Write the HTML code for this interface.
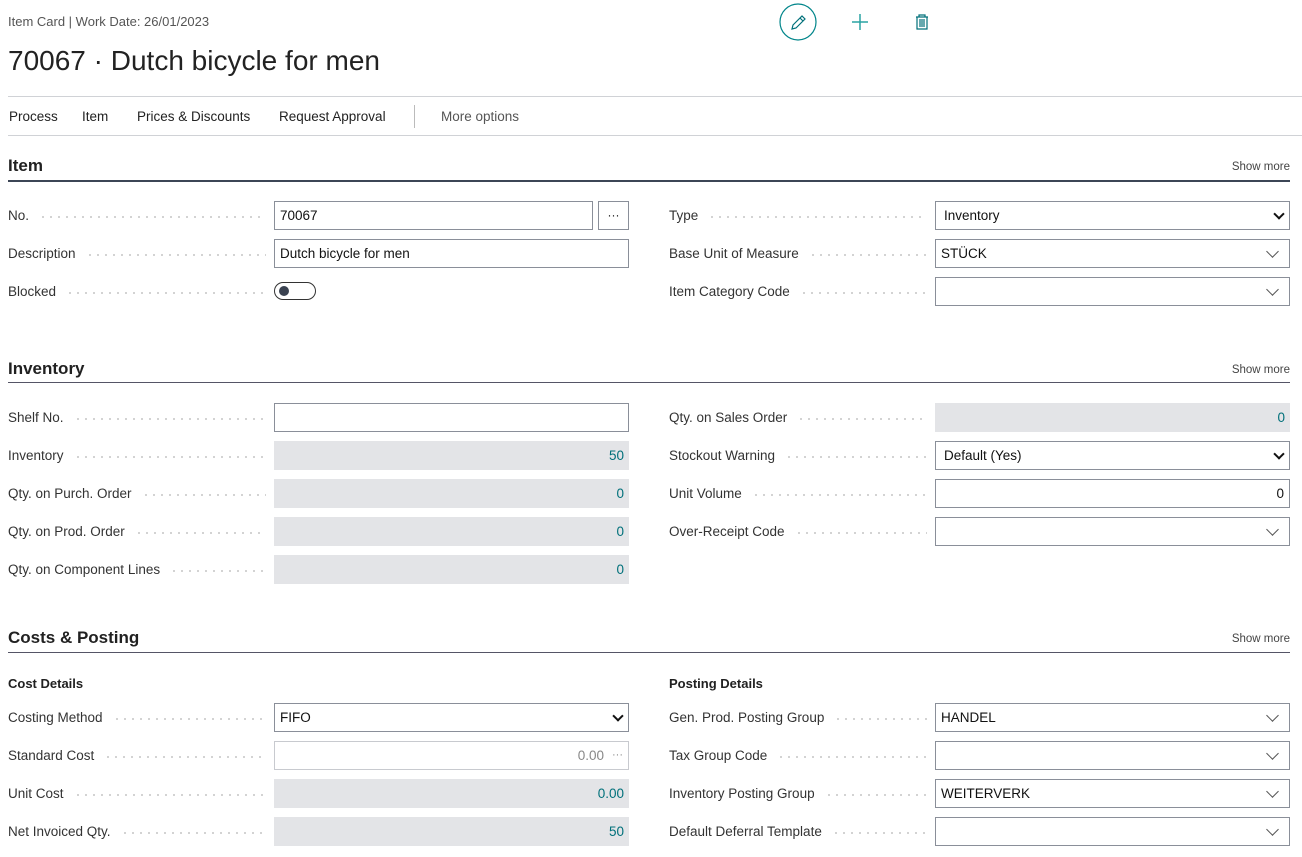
<!DOCTYPE html>
<html><head><meta charset="utf-8"><style>
*{box-sizing:border-box;margin:0;padding:0}
body{width:1302px;height:857px;background:#fff;font-family:"Liberation Sans",sans-serif;color:#212121;position:relative;overflow:hidden;font-size:13.5px}
.a{position:absolute}
.row{position:absolute;height:30px;width:621px;display:flex;align-items:center}
.lab{width:266px;display:flex;align-items:center;height:100%;padding-right:8px;color:#333}
.lab span{white-space:nowrap}
.lab i{flex:1;margin-left:10px;height:2px;margin-top:4px;background-image:radial-gradient(circle,#c4c4c4 0.8px,transparent 1px);background-size:8px 2px;background-repeat:repeat-x}
.f{width:355px;height:29px;border:1px solid #8a8f99;display:flex;align-items:center;padding:0 5px;position:relative;color:#111}
.ro{background:#e3e4e7;border:none;justify-content:flex-end;color:#00707a;padding-right:5px}
.dd::after{content:"";position:absolute;right:12px;top:7px;width:8px;height:8px;border-right:1px solid #555;border-bottom:1px solid #555;transform:rotate(45deg)}
.sel::after{content:"";position:absolute;right:6px;top:8px;width:6px;height:6px;border-right:2px solid #111;border-bottom:2px solid #111;transform:rotate(45deg)}
.sec{position:absolute;left:8px;width:1282px;height:2px;background:#3c4656}
.st{position:absolute;left:8px;font-size:17px;font-weight:bold;color:#212121}
.sm{position:absolute;right:12px;font-size:11.5px;color:#444}
.sub{position:absolute;font-weight:bold;font-size:13px}
</style></head><body>
<div class="a" style="left:8px;top:14px;font-size:13px;color:#555">Item Card | Work Date: 26/01/2023</div>
<div class="a" style="left:8px;top:45px;font-size:28px;color:#222">70067 · Dutch bicycle for men</div>
<svg class="a" style="left:779px;top:3px" width="40" height="40"><circle cx="19" cy="19" r="18" fill="none" stroke="#00858a" stroke-width="1.2"/><path d="M13 26 L14 22 L23 13 L26 16 L17 25 Z M21 15 L24 18" fill="none" stroke="#00707a" stroke-width="1.2"/></svg>
<svg class="a" style="left:850px;top:12px" width="20" height="20"><path d="M10 2V18M2 10H18" stroke="#2aa3a3" stroke-width="1.5"/></svg>
<svg class="a" style="left:913px;top:13px" width="18" height="18"><path d="M3 4H15M6 4V2H12V4M4 4V16H14V4M7 6V14M9 6V14M11 6V14" fill="none" stroke="#00707a" stroke-width="1.2"/></svg>
<div class="a" style="left:8px;top:96px;width:1294px;height:1px;background:#d0d2d6"></div>
<div class="a" style="left:8px;top:135px;width:1294px;height:1px;background:#d0d2d6"></div>
<div class="a" style="left:9px;top:109px;font-size:13.5px;color:#222">Process</div>
<div class="a" style="left:82px;top:109px;font-size:13.5px;color:#222">Item</div>
<div class="a" style="left:137px;top:109px;font-size:13.5px;color:#222">Prices &amp; Discounts</div>
<div class="a" style="left:279px;top:109px;font-size:13.5px;color:#222">Request Approval</div>
<div class="a" style="left:414px;top:105px;width:1px;height:23px;background:#bbb"></div>
<div class="a" style="left:441px;top:109px;font-size:13.5px;color:#555">More options</div>

<div class="st" style="top:156px">Item</div><div class="sm" style="top:161px">Show more</div><div class="sec" style="top:180px"></div>
<div class="row" style="left:8px;top:200px"><div class="lab"><span>No.</span><i></i></div><div class="f" style="width:319px">70067</div><div class="f" style="width:31px;margin-left:5px;justify-content:center;font-size:12px">···</div></div>
<div class="row" style="left:8px;top:238px"><div class="lab"><span>Description</span><i></i></div><div class="f">Dutch bicycle for men</div></div>
<div class="row" style="left:8px;top:276px"><div class="lab"><span>Blocked</span><i></i></div><div style="width:42px;height:18px;border:1px solid #333;border-radius:9px;position:relative"><div style="position:absolute;left:4px;top:3px;width:10px;height:10px;border-radius:50%;background:#3a4250"></div></div></div>
<div class="row" style="left:669px;top:200px"><div class="lab"><span>Type</span><i></i></div><div class="f sel" style="padding-left:8px">Inventory</div></div>
<div class="row" style="left:669px;top:238px"><div class="lab"><span>Base Unit of Measure</span><i></i></div><div class="f dd">STÜCK</div></div>
<div class="row" style="left:669px;top:276px"><div class="lab"><span>Item Category Code</span><i></i></div><div class="f dd"></div></div>

<div class="st" style="top:359px">Inventory</div><div class="sm" style="top:364px">Show more</div><div class="sec" style="top:382px;height:1px;background:#556"></div>
<div class="row" style="left:8px;top:402px"><div class="lab"><span>Shelf No.</span><i></i></div><div class="f"></div></div>
<div class="row" style="left:8px;top:440px"><div class="lab"><span>Inventory</span><i></i></div><div class="f ro">50</div></div>
<div class="row" style="left:8px;top:478px"><div class="lab"><span>Qty. on Purch. Order</span><i></i></div><div class="f ro">0</div></div>
<div class="row" style="left:8px;top:516px"><div class="lab"><span>Qty. on Prod. Order</span><i></i></div><div class="f ro">0</div></div>
<div class="row" style="left:8px;top:554px"><div class="lab"><span>Qty. on Component Lines</span><i></i></div><div class="f ro">0</div></div>
<div class="row" style="left:669px;top:402px"><div class="lab"><span>Qty. on Sales Order</span><i></i></div><div class="f ro">0</div></div>
<div class="row" style="left:669px;top:440px"><div class="lab"><span>Stockout Warning</span><i></i></div><div class="f sel" style="padding-left:8px">Default (Yes)</div></div>
<div class="row" style="left:669px;top:478px"><div class="lab"><span>Unit Volume</span><i></i></div><div class="f" style="justify-content:flex-end">0</div></div>
<div class="row" style="left:669px;top:516px"><div class="lab"><span>Over-Receipt Code</span><i></i></div><div class="f dd"></div></div>

<div class="st" style="top:628px">Costs &amp; Posting</div><div class="sm" style="top:633px">Show more</div><div class="sec" style="top:652px;height:1px;background:#556"></div>
<div class="sub" style="left:8px;top:676px">Cost Details</div>
<div class="sub" style="left:669px;top:676px">Posting Details</div>
<div class="row" style="left:8px;top:702px"><div class="lab"><span>Costing Method</span><i></i></div><div class="f sel">FIFO</div></div>
<div class="row" style="left:8px;top:740px"><div class="lab"><span>Standard Cost</span><i></i></div><div class="f" style="border-color:#c8cacf;justify-content:flex-end;color:#888">0.00<span style="margin-left:8px;font-size:11px">···</span></div></div>
<div class="row" style="left:8px;top:778px"><div class="lab"><span>Unit Cost</span><i></i></div><div class="f ro">0.00</div></div>
<div class="row" style="left:8px;top:816px"><div class="lab"><span>Net Invoiced Qty.</span><i></i></div><div class="f ro">50</div></div>
<div class="row" style="left:669px;top:702px"><div class="lab"><span>Gen. Prod. Posting Group</span><i></i></div><div class="f dd">HANDEL</div></div>
<div class="row" style="left:669px;top:740px"><div class="lab"><span>Tax Group Code</span><i></i></div><div class="f dd"></div></div>
<div class="row" style="left:669px;top:778px"><div class="lab"><span>Inventory Posting Group</span><i></i></div><div class="f dd">WEITERVERK</div></div>
<div class="row" style="left:669px;top:816px"><div class="lab"><span>Default Deferral Template</span><i></i></div><div class="f dd"></div></div>
</body></html>
